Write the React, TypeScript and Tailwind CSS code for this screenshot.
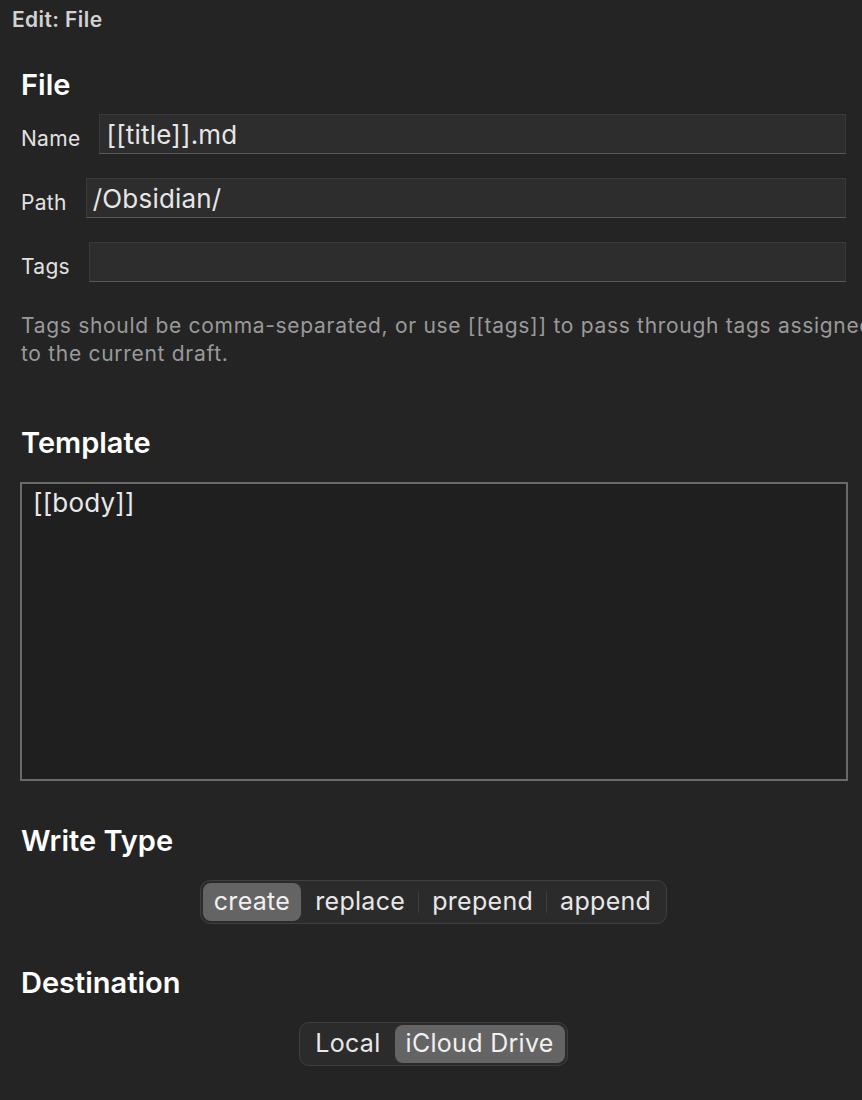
import React from 'react';

const font = "font-['Inter','Noto_Sans',sans-serif]";

const Field: React.FC<{ label: string; value?: string }> = ({ label, value }) => (
  <div className="flex items-center h-[40px]">
    <span className="pt-[9px] text-[21px] tracking-[0.3px] text-[#e2e2e2] mr-[19px] shrink-0">{label}</span>
    <div className="flex-1 h-[40px] flex items-center bg-[#2d2d2d] border border-[#3a3a3a] border-b-[#575757] pl-[6px] text-[26px] tracking-[0.2px] text-[#e6e6e6]">
      {value}
    </div>
  </div>
);

const Segmented: React.FC<{ options: string[]; selected: number }> = ({ options, selected }) => (
  <div className="flex justify-center">
    <div className="flex items-center h-[44px] p-[2px] rounded-[10px] bg-[#2b2b2b] border border-[#3f3f3f]">
      {options.map((opt, i) => {
        const active = i === selected;
        const showSep = i > 0 && i !== selected && i - 1 !== selected;
        return (
          <React.Fragment key={opt}>
            {i > 0 && (
              <div className={showSep ? 'w-px h-[22px] bg-[#3e3e3e]' : 'w-px h-[22px] bg-transparent'} />
            )}
            <div
              className={
                active
                  ? 'h-full flex items-center px-[11px] rounded-[8px] bg-[#646464] text-[25px] tracking-[0.3px] text-[#f0f0f0]'
                  : 'h-full flex items-center px-[13px] text-[25px] tracking-[0.3px] text-[#e8e8e8]'
              }
            >
              {opt}
            </div>
          </React.Fragment>
        );
      })}
    </div>
  </div>
);

export default function App() {
  return (
    <div className={`w-[862px] min-h-[1100px] overflow-hidden bg-[#242424] ${font}`}>
      <div className="pt-[8px] pl-[12px] text-[21px] tracking-[0.4px] leading-[24px] font-semibold text-[#d2d2d2]">Edit: File</div>

      <div className="pl-[21px] pr-[16px]">
        <h2 className="mt-[36px] text-[29px] leading-[34px] font-semibold text-white">File</h2>

        <div className="mt-[12px]">
          <Field label="Name" value="[[title]].md" />
        </div>
        <div className="mt-[24px]">
          <Field label="Path" value="/Obsidian/" />
        </div>
        <div className="mt-[24px]">
          <Field label="Tags" />
        </div>

        <p className="mt-[30px] w-[900px] text-[21px] tracking-[0.7px] leading-[28px] text-[#9a9a9a] whitespace-nowrap">
          Tags should be comma-separated, or use [[tags]] to pass through tags assigned
          <br />
          to the current draft.
        </p>

        <h2 className="mt-[58px] text-[29px] leading-[34px] font-semibold text-white">Template</h2>

        <div className="mt-[22px] ml-[-1px] mr-[-2px] h-[299px] bg-[#1f1f1f] border-2 border-[#6a6a6a] pl-[11px] pt-[3px] text-[26px] tracking-[0.2px] leading-[32px] text-[#e8e8e8]">
          [[body]]
        </div>

        <h2 className="mt-[43px] text-[29px] leading-[34px] font-semibold text-white">Write Type</h2>
        <div className="mt-[22px]">
          <Segmented options={['create', 'replace', 'prepend', 'append']} selected={0} />
        </div>

        <h2 className="mt-[42px] text-[29px] leading-[34px] font-semibold text-white">Destination</h2>
        <div className="mt-[22px]">
          <Segmented options={['Local', 'iCloud Drive']} selected={1} />
        </div>
      </div>
    </div>
  );
}
